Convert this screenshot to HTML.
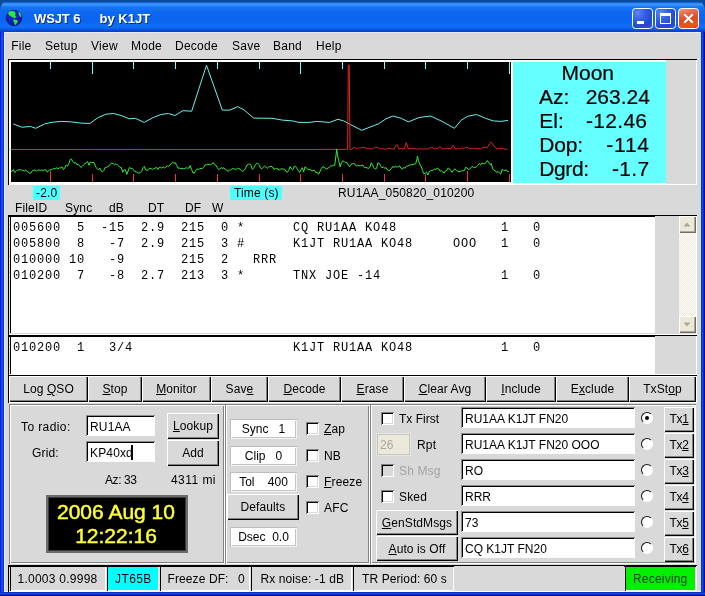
<!DOCTYPE html>
<html lang="en"><head><meta charset="utf-8"><title>WSJT 6 by K1JT</title>
<style>
html,body{margin:0;padding:0}
body{width:705px;height:596px;overflow:hidden;background:#d9d9d9;position:relative;font-family:"Liberation Sans",Arial,sans-serif;font-size:12px;color:#000}
div,svg{position:absolute;box-sizing:border-box}
#win{left:0;top:0;width:705px;height:596px;overflow:hidden;background:#d9d9d9;will-change:transform}
svg svg, div>svg{position:static}
.abs{position:absolute}
.t{white-space:nowrap;line-height:14px;font-size:12px;letter-spacing:0.15px}
.mono{white-space:nowrap;font-family:"Liberation Mono","Courier New",monospace;font-size:12px;letter-spacing:0.8px;line-height:16px}
.moon{white-space:nowrap;font-size:21px;line-height:24px;-webkit-text-stroke:0.2px #000}
.clock{white-space:nowrap;font-size:21px;line-height:24px;color:#ffff33;-webkit-text-stroke:0.45px #ffff33}
.title{white-space:nowrap;font-weight:bold;font-size:13px;line-height:16px;color:#fff;text-shadow:1px 1px 0 #0a2a8a}
.titlebar{border-radius:9px 9px 0 0/11px 11px 0 0;background:linear-gradient(to bottom,#0a4a9c 0,#0a4ca6 2px,#2a80f4 3px,#3c96ff 4.5px,#1876f6 7px,#0e68f0 12px,#0c64ee 21px,#1070f8 27px,#0a56e0 29.5px,#0a3cc4 32px)}
.bl{background:linear-gradient(to right,#001cd4 0,#001cd4 1px,#0c44f0 1px,#0c44f0 2px,#1650f2 2px,#1650f2 3px,#0a30e0 3px)}
.br{background:linear-gradient(to left,#001098 0,#001098 1px,#0a2cc4 1px,#0a2cc4 2px,#1848e0 2px,#1848e0 3px,#0a30d0 3px)}
.bb{background:linear-gradient(to top,#001098 0,#001098 1px,#0a2cc4 1px,#0a2cc4 2px,#1848e0 2px,#1848e0 3px,#0a30d0 3px)}
.sunk{box-shadow:inset 1px 1px 0 #8c8c8c, inset -1px -1px 0 #fff, inset 2px 2px 0 #000}
.rais{box-shadow:inset 1px 1px 0 #fff, inset -1px -1px 0 #000, inset 2px 2px 0 #d9d9d9, inset -2px -2px 0 #828282}
.sunk1{box-shadow:inset 1px 1px 0 #000, inset -1px -1px 0 #fff}
.txt{background:#fff;box-shadow:inset 0 1px 0 #000, inset 1px 0 0 #e4e4e4, inset 2px 0 0 #000}
.sb{background:#ece9d8;box-shadow:inset 1px 1px 0 #fff, inset -1px -1px 0 #716f64, inset -2px -2px 0 #aca899}
.groove{box-shadow:inset 1px 1px 0 #828282, inset -1px -1px 0 #fff, inset 2px 2px 0 #fff, inset -2px -2px 0 #828282}
.rais1{box-shadow:inset 1px 1px 0 #fff, inset -1px -1px 0 #828282}
.btn{box-shadow:inset 1px 1px 0 #fff, inset -1px -1px 0 #000, inset -2px -2px 0 #828282;text-align:center;font-size:12px;letter-spacing:0.1px;white-space:nowrap;background:#d9d9d9}
.wlab{background:#fff;text-align:center;white-space:nowrap;box-shadow:inset 1px 1px 0 #bdbdbd, inset -1px -1px 0 #f4f4f4, inset 2px 2px 0 #fff, inset -2px -2px 0 #c4c4c4;border:0}
.stat{text-align:center;white-space:nowrap;padding-left:2px;box-shadow:inset 0 1px 0 #000, inset 1px 0 0 #e0e0e0, inset 2px 0 0 #000, inset -1px -1px 0 #fff}
.dis{background:#ebe9dc;box-shadow:inset 0 0 0 1px #e6e6e0, inset 0 0 0 2px #c6c6ba}
.chk{box-shadow:inset 1px 1px 0 #828282, inset -1px -1px 0 #fff, inset 2px 2px 0 #000, inset -2px -2px 0 #d9d9d9}
.radio{width:12px;height:12px;border-radius:50%;background:#fff;border:1.4px solid;border-color:#111 #fff #fff #111;transform:rotate(0deg)}
.radio i{position:absolute;left:2.6px;top:2.6px;width:4px;height:4px;border-radius:50%;background:#000}
u{text-decoration:underline;text-decoration-thickness:1px;text-underline-offset:1px}
</style></head>
<body>
<div id="win">
<div class="abs" style="left:0px;top:0px;width:705px;height:32px;background:#0a4a9c"></div>
<div class="titlebar" style="left:0px;top:0px;width:705px;height:32px;"></div>
<div class="abs" style="left:4px;top:32px;width:697px;height:1px;background:#e6edf7"></div>
<div class="abs" style="left:700px;top:32px;width:1px;height:560px;background:#c4dcfc"></div>
<div class="abs" style="left:4px;top:32px;width:1px;height:560px;background:#e6ebfa"></div>
<div class="abs" style="left:4px;top:591px;width:697px;height:1px;background:#f4f4f4"></div>
<div class="bl" style="left:0px;top:32px;width:4px;height:564px;"></div>
<div class="br" style="left:701px;top:32px;width:4px;height:564px;"></div>
<div class="bb" style="left:0px;top:592px;width:705px;height:4px;"></div>
<svg class="abs" style="left:4px;top:8px" width="20" height="20" viewBox="0 0 20 20">
<defs><radialGradient id="gl" cx="40%" cy="35%" r="75%"><stop offset="0" stop-color="#1a34d8"/><stop offset="1" stop-color="#0a0a9a"/></radialGradient></defs>
<circle cx="10" cy="10" r="7.9" fill="url(#gl)" stroke="#0a1a80" stroke-width="0.6"/>
<path d="M6.6 3.1 L10.5 3.3 L11.7 5.6 L11.1 7.3 L12.3 9.0 L10.6 10.3 L8.8 9.3 L7.1 8.6 L5.4 7.3 L3.9 5.6 L4.8 3.9 Z" fill="#2ee83a"/>
<path d="M9.4 11.4 L13.0 12.0 L14.0 13.3 L12.8 15.0 L11.8 17.1 L10.5 16.3 L10.1 14.1 L9.1 12.9 Z" fill="#2ee83a"/>
<path d="M14.3 3.7 L16.0 4.8 L17.0 6.9 L17.0 9.3 L15.6 8.2 L14.7 6.0 Z" fill="#2ee83a"/>
</svg>
<div class="title" style="left:34px;top:11px;letter-spacing:-0.1px">WSJT 6</div>
<div class="title" style="left:99.5px;top:11px;letter-spacing:0">by K1JT</div>
<div class="abs" style="left:632px;top:8px;width:21px;height:21px;border-radius:3.5px;box-sizing:border-box;border:1px solid #fff;background:radial-gradient(circle at 25% 20%,#5c86f2 0%,#3560e4 35%,#2048d0 70%,#2a5ae0 100%)"><svg width="19" height="19" viewBox="1 1 19 19" style="display:block"><rect x="5" y="13" width="7" height="3" fill="#fff"/></svg></div>
<div class="abs" style="left:655px;top:8px;width:21px;height:21px;border-radius:3.5px;box-sizing:border-box;border:1px solid #fff;background:radial-gradient(circle at 25% 20%,#5c86f2 0%,#3560e4 35%,#2048d0 70%,#2a5ae0 100%)"><svg width="19" height="19" viewBox="1 1 19 19" style="display:block"><rect x="5.5" y="6.5" width="10" height="9" fill="none" stroke="#fff" stroke-width="1"/><rect x="5" y="5" width="11" height="3" fill="#fff"/></svg></div>
<div class="abs" style="left:678px;top:8px;width:21px;height:21px;border-radius:3.5px;box-sizing:border-box;border:1px solid #fff;background:linear-gradient(165deg,#eba58e 0%,#e3704e 22%,#dd4c26 52%,#ee5614 84%,#cc3c10 100%)"><svg width="19" height="19" viewBox="1 1 19 19" style="display:block"><path d="M6.2 6.2 L14.8 14.8 M14.8 6.2 L6.2 14.8" stroke="#fff" stroke-width="2" stroke-linecap="butt"/></svg></div>
<div class="t" style="left:11.2px;top:39px;letter-spacing:0.25px">File</div>
<div class="t" style="left:45px;top:39px;letter-spacing:0.25px">Setup</div>
<div class="t" style="left:91px;top:39px;letter-spacing:0.25px">View</div>
<div class="t" style="left:131px;top:39px;letter-spacing:0.25px">Mode</div>
<div class="t" style="left:175px;top:39px;letter-spacing:0.25px">Decode</div>
<div class="t" style="left:232px;top:39px;letter-spacing:0.25px">Save</div>
<div class="t" style="left:273px;top:39px;letter-spacing:0.25px">Band</div>
<div class="t" style="left:316px;top:39px;letter-spacing:0.25px">Help</div>
<div class="sunk1" style="left:8px;top:59px;width:689px;height:126px;"></div>
<div class="abs" style="left:9px;top:60px;width:504px;height:124px;background:#fff"></div>
<div class="abs" style="left:513px;top:60px;width:153px;height:124px;background:#f2fbfb"></div>
<div class="abs" style="left:11px;top:62px;width:500px;height:120px;background:#000"></div>
<div class="abs" style="left:513px;top:62px;width:153px;height:121px;background:#66ffff"></div>
<svg class="abs" style="left:11px;top:62px" width="500" height="120" viewBox="0 0 500 120"><rect x="39" y="0" width="1" height="7" fill="#7ffafa"/><rect x="39" y="109" width="1" height="11" fill="#f03040"/><rect x="81" y="0" width="1" height="12" fill="#7ffafa"/><rect x="81" y="112" width="1" height="8" fill="#f03040"/><rect x="122" y="0" width="1" height="7" fill="#7ffafa"/><rect x="122" y="112" width="1" height="8" fill="#f03040"/><rect x="164" y="0" width="1" height="7" fill="#7ffafa"/><rect x="164" y="112" width="1" height="8" fill="#f03040"/><rect x="206" y="0" width="1" height="7" fill="#7ffafa"/><rect x="206" y="112" width="1" height="8" fill="#f03040"/><rect x="248" y="0" width="1" height="7" fill="#7ffafa"/><rect x="248" y="112" width="1" height="8" fill="#f03040"/><rect x="289" y="0" width="1" height="12" fill="#7ffafa"/><rect x="289" y="112" width="1" height="8" fill="#f03040"/><rect x="331" y="0" width="1" height="7" fill="#7ffafa"/><rect x="331" y="112" width="1" height="8" fill="#f03040"/><rect x="373" y="0" width="1" height="7" fill="#7ffafa"/><rect x="373" y="112" width="1" height="8" fill="#f03040"/><rect x="414" y="0" width="1" height="7" fill="#7ffafa"/><rect x="414" y="112" width="1" height="8" fill="#f03040"/><rect x="456" y="0" width="1" height="7" fill="#7ffafa"/><rect x="456" y="109" width="1" height="11" fill="#f03040"/><rect x="498" y="0" width="1" height="12" fill="#7ffafa"/><rect x="498" y="112" width="1" height="8" fill="#f03040"/><polyline points="2.3,61.9 10.7,65.2 19.6,64.5 24.7,66.3 33.7,61.9 40.0,60.4 50.3,59.4 60.5,59.9 70.7,61.2 78.9,61.4 87.3,55.5 95.0,52.2 102.6,51.5 110.3,53.5 118.0,56.8 124.3,56.3 133.2,60.4 142.2,55.5 149.8,52.5 157.5,51.5 163.9,53.5 171.8,48.7 180.7,49.2 195.5,3.2 211.3,48.1 219.0,48.1 226.7,44.6 233.0,47.9 242.7,56.1 261.1,56.3 271.3,58.1 281.5,58.9 287.9,60.4 298.1,60.4 305.8,59.4 318.6,60.4 327.0,57.3 332.6,58.9 339.2,62.4 350.7,68.3 367.3,61.9 375.0,56.8 381.8,54.0 390.3,56.3 397.4,59.9 408.1,55.5 419.6,54.0 431.1,59.4 443.4,66.3 450.3,58.1 456.7,54.3 465.6,52.5 474.5,56.3 482.2,58.9 489.8,59.4 497.0,58.4" fill="none" stroke="#6af0f0" stroke-width="1"/><polyline points="0.0,87.5 334.3,87.4 336.6,87.4 337.3,3.0 338.2,3.0 339.0,87.4 340.7,87.4 342.0,86.3 343.4,85.3 344.8,86.1 346.1,87.1 347.6,85.8 349.2,86.0 350.7,85.6 352.0,85.4 353.4,85.3 354.8,85.8 356.1,86.7 357.5,86.2 358.9,86.9 360.2,86.8 361.6,87.1 363.1,86.0 364.6,85.2 366.1,85.3 367.5,85.8 368.8,87.1 370.2,86.4 371.6,86.7 372.9,87.0 374.3,87.4 375.0,87.4 376.4,86.5 377.7,86.4 379.1,86.4 380.5,86.9 381.8,86.9 383.2,87.1 384.5,84.2 385.9,82.5 388.1,87.1 389.8,86.2 391.5,87.0 393.2,87.1 395.3,80.7 397.5,87.1 399.0,86.3 400.4,86.5 401.9,86.6 403.3,86.3 404.8,87.0 406.2,87.0 407.7,87.1 409.0,86.5 410.3,87.1 411.6,86.8 412.9,87.1 414.2,86.8 415.5,87.0 416.8,87.1 418.6,86.0 420.4,85.6 421.8,85.5 423.1,87.1 424.8,86.0 426.4,86.7 428.6,84.9 430.0,85.4 431.3,87.1 432.7,86.7 434.0,86.8 435.4,86.6 436.8,86.7 438.1,86.3 439.5,87.1 440.9,84.8 442.2,83.4 444.4,87.1 445.8,86.9 447.3,86.3 448.8,86.7 450.2,86.0 451.7,86.1 453.1,86.7 454.5,85.1 455.8,85.3 457.1,85.7 458.5,87.1 459.9,86.4 461.2,87.0 462.6,86.2 463.9,86.9 465.3,86.3 466.7,86.9 468.0,86.6 469.4,87.1 471.2,85.9 473.0,85.6 474.4,85.2 475.8,86.2 477.3,83.9 478.8,81.4 480.3,80.2 481.6,81.8 483.0,84.4 484.4,85.1 485.8,87.1 487.2,86.7 488.5,86.5 489.9,86.4 491.2,86.7 492.6,86.7 493.9,87.2 495.2,87.3 496.6,87.4" fill="none" stroke="#e02626" stroke-width="1"/><polyline points="-0.3,110.1 1.0,108.9 2.4,107.6 3.7,110.6 5.1,109.4 6.4,108.1 7.8,108.0 9.2,107.6 10.5,108.3 11.9,108.1 13.2,109.1 14.6,107.8 15.9,109.4 17.3,109.9 18.6,111.5 20.0,110.9 21.3,108.7 22.7,108.2 24.0,108.0 25.4,109.1 26.7,108.7 28.1,107.5 29.4,109.1 30.8,107.7 32.1,108.8 33.5,107.7 34.8,107.8 36.2,110.1 37.5,109.0 38.9,107.9 40.2,107.7 41.6,107.2 42.9,106.4 44.3,107.1 45.6,105.6 47.0,106.8 48.3,105.8 49.7,105.9 51.0,104.9 52.4,107.6 53.7,106.0 55.1,103.0 56.4,104.2 57.8,101.7 59.1,97.8 59.6,97.1 60.5,97.2 61.8,99.5 63.2,101.2 64.5,100.3 65.8,102.5 67.2,102.6 68.5,103.5 69.9,105.5 71.2,104.4 72.6,102.8 73.9,101.7 75.3,100.7 76.6,99.5 78.0,103.3 79.3,99.9 80.7,100.7 82.0,100.3 83.4,101.0 84.7,105.1 86.1,106.4 87.4,107.9 88.8,106.1 90.1,108.9 91.5,109.9 92.8,108.7 94.2,105.4 95.5,105.3 96.9,104.6 98.2,103.8 99.6,101.7 100.9,101.1 102.3,101.7 103.6,102.9 105.0,101.6 106.3,103.0 107.7,104.0 109.0,105.5 110.4,105.7 111.7,110.2 113.1,107.9 114.4,107.7 115.8,112.4 117.1,109.0 118.5,105.5 119.8,106.3 121.2,106.3 122.5,107.6 123.9,109.7 125.2,109.8 126.6,110.7 127.9,111.1 129.3,110.6 130.6,109.5 132.0,105.6 133.3,104.3 134.7,108.0 136.0,108.4 137.4,107.9 138.7,106.1 140.1,106.6 141.4,107.5 142.8,106.7 144.1,106.1 145.5,105.3 146.8,107.5 148.2,105.3 149.5,105.5 150.9,106.2 152.2,105.0 153.6,106.0 154.9,105.1 156.3,103.9 157.6,104.7 159.0,102.7 160.3,101.9 161.7,100.2 163.0,101.3 164.4,100.7 165.7,103.5 167.1,106.3 168.4,106.0 169.8,106.6 171.1,106.3 172.5,106.7 173.8,106.5 175.2,105.8 176.5,106.1 177.9,106.2 179.2,103.6 180.6,107.4 181.9,110.8 183.3,111.2 184.6,108.6 186.0,107.1 187.3,107.3 188.7,106.9 190.0,106.3 191.4,106.4 192.7,105.3 194.1,102.9 195.4,102.9 196.8,102.3 198.1,102.6 199.5,102.7 200.8,102.0 202.2,100.6 203.5,102.7 204.9,103.2 206.2,105.4 207.6,107.5 208.9,106.9 210.3,105.6 211.6,106.6 213.0,105.7 214.3,107.6 215.7,107.9 217.0,109.5 218.4,108.0 219.7,108.0 221.1,106.6 222.4,106.9 223.8,107.0 225.1,107.5 226.5,106.1 227.8,106.6 229.2,107.2 230.5,108.4 231.9,109.5 233.2,108.3 234.6,106.2 235.9,103.1 237.3,102.4 238.6,101.9 240.0,103.2 241.3,107.3 242.7,105.7 244.0,103.6 245.4,101.5 246.7,101.1 248.1,102.8 249.4,106.0 250.8,106.9 252.1,105.4 253.5,104.0 254.8,104.9 256.2,106.4 257.5,105.1 258.9,104.6 260.2,104.3 261.6,105.1 262.9,107.5 264.3,106.7 265.6,106.5 267.0,107.2 268.3,108.1 269.7,106.9 271.0,107.0 272.4,107.1 273.7,107.2 275.1,109.5 276.4,110.3 277.8,108.3 279.1,104.6 280.5,106.9 281.8,107.8 283.2,104.4 284.5,104.3 285.9,106.6 287.2,108.2 288.6,110.5 289.9,107.9 291.3,105.7 292.7,109.7 294.0,104.9 295.4,106.0 296.7,107.1 298.1,107.8 299.4,107.2 300.8,109.0 302.1,108.5 303.5,108.4 304.8,110.6 306.2,110.4 307.5,112.3 308.9,109.8 310.2,106.7 311.6,104.7 312.9,105.0 314.3,106.7 315.6,107.0 317.0,106.2 318.3,105.1 319.7,103.9 321.0,104.0 322.4,103.2 323.7,103.5 325.1,92.8 325.6,87.1 326.4,92.2 327.1,96.2 327.8,98.8 329.1,104.8 330.5,100.6 331.8,98.9 333.2,99.6 334.5,100.5 335.9,100.6 337.2,102.9 338.6,104.8 339.9,102.5 341.3,101.6 342.6,101.6 344.0,102.2 345.3,104.2 346.7,103.0 348.0,103.8 349.4,103.6 350.7,103.3 352.1,103.2 353.4,105.7 354.8,105.4 356.1,105.9 357.5,106.4 358.8,105.5 360.2,100.8 361.5,102.9 362.9,105.7 364.2,107.1 365.6,106.4 366.9,100.9 368.3,101.3 369.6,103.7 371.0,105.8 372.3,105.0 373.7,106.2 375.0,105.6 376.4,108.0 377.7,108.6 379.1,108.1 380.4,106.6 381.8,104.3 383.1,105.7 384.5,104.0 385.8,105.1 387.2,104.8 388.5,103.8 389.9,106.1 391.2,107.3 392.6,105.5 393.9,106.2 395.3,104.3 396.6,104.1 398.0,103.3 399.3,102.7 400.7,102.8 402.0,102.4 403.4,102.2 404.7,101.8 406.1,96.5 406.4,94.0 407.4,98.8 408.8,102.1 410.1,104.5 411.5,108.3 412.8,111.7 414.2,111.2 415.5,110.2 416.9,113.0 418.2,109.5 419.6,108.7 420.9,108.6 422.3,107.9 423.6,107.1 425.0,107.6 426.3,106.0 427.7,106.8 429.0,109.2 430.4,108.8 431.7,109.9 433.1,111.1 434.4,109.0 435.8,108.4 437.1,106.0 438.5,106.8 439.8,108.7 441.2,110.3 442.5,108.0 443.9,106.8 445.2,108.2 446.6,109.2 447.9,109.8 449.3,109.4 450.6,108.8 452.0,108.9 453.3,108.5 454.7,105.4 456.0,105.9 457.4,107.6 458.7,106.9 460.1,105.7 461.4,104.2 462.8,105.7 464.1,105.6 465.5,104.7 466.8,103.5 468.2,101.6 469.5,102.9 470.9,101.1 472.2,101.6 473.6,101.8 474.9,100.7 476.3,98.6 477.6,100.2 479.0,102.7 480.3,101.7 481.7,106.9 483.0,108.4 484.4,108.8 485.7,110.4 487.1,109.5 488.4,111.0 489.8,112.1 491.1,107.4 492.5,108.3 493.8,108.7 495.2,107.9 496.5,109.6 497.9,109.6" fill="none" stroke="#34ee34" stroke-width="1" stroke-linejoin="round"/></svg>
<div class="moon" style="left:561.5px;top:61px;">Moon</div>
<div class="moon" style="left:539px;top:85px;">Az:</div>
<div class="moon" style="left:585.7px;top:85px;">263.24</div>
<div class="moon" style="left:539.3px;top:109px;">El:</div>
<div class="moon" style="left:586px;top:109px;letter-spacing:0.3px">-12.46</div>
<div class="moon" style="left:539.3px;top:133px;letter-spacing:-0.2px">Dop:</div>
<div class="moon" style="left:606.3px;top:133px;letter-spacing:0.75px">-114</div>
<div class="moon" style="left:539.3px;top:157px;letter-spacing:-0.4px">Dgrd:</div>
<div class="moon" style="left:612px;top:157px;letter-spacing:0.3px">-1.7</div>
<div class="abs" style="left:33px;top:186px;width:27px;height:14px;background:#4dffff"></div>
<div class="t" style="left:36px;top:186px;">-2.0</div>
<div class="abs" style="left:230px;top:186px;width:52px;height:14px;background:#4dffff"></div>
<div class="t" style="left:234px;top:186px;">Time (s)</div>
<div class="t" style="left:338px;top:186px;">RU1AA_050820_010200</div>
<div class="t" style="left:15px;top:201px;">FileID</div>
<div class="t" style="left:65px;top:201px;">Sync</div>
<div class="t" style="left:109px;top:201px;">dB</div>
<div class="t" style="left:148px;top:201px;">DT</div>
<div class="t" style="left:185px;top:201px;">DF</div>
<div class="t" style="left:212px;top:201px;">W</div>
<div class="sunk1" style="left:8px;top:215px;width:689px;height:120px;"></div>
<div class="txt" style="left:9px;top:216px;width:646px;height:117px;"></div>
<div class="mono" style="left:13px;top:220px;">005600&nbsp;&nbsp;5&nbsp;&nbsp;-15&nbsp;&nbsp;2.9&nbsp;&nbsp;215&nbsp;&nbsp;0&nbsp;*&nbsp;&nbsp;&nbsp;&nbsp;&nbsp;&nbsp;CQ&nbsp;RU1AA&nbsp;KO48&nbsp;&nbsp;&nbsp;&nbsp;&nbsp;&nbsp;&nbsp;&nbsp;&nbsp;&nbsp;&nbsp;&nbsp;&nbsp;1&nbsp;&nbsp;&nbsp;0</div>
<div class="mono" style="left:13px;top:236px;">005800&nbsp;&nbsp;8&nbsp;&nbsp;&nbsp;-7&nbsp;&nbsp;2.9&nbsp;&nbsp;215&nbsp;&nbsp;3&nbsp;#&nbsp;&nbsp;&nbsp;&nbsp;&nbsp;&nbsp;K1JT&nbsp;RU1AA&nbsp;KO48&nbsp;&nbsp;&nbsp;&nbsp;&nbsp;OOO&nbsp;&nbsp;&nbsp;1&nbsp;&nbsp;&nbsp;0</div>
<div class="mono" style="left:13px;top:252px;">010000&nbsp;10&nbsp;&nbsp;&nbsp;-9&nbsp;&nbsp;&nbsp;&nbsp;&nbsp;&nbsp;&nbsp;215&nbsp;&nbsp;2&nbsp;&nbsp;&nbsp;RRR</div>
<div class="mono" style="left:13px;top:268px;">010200&nbsp;&nbsp;7&nbsp;&nbsp;&nbsp;-8&nbsp;&nbsp;2.7&nbsp;&nbsp;213&nbsp;&nbsp;3&nbsp;*&nbsp;&nbsp;&nbsp;&nbsp;&nbsp;&nbsp;TNX&nbsp;JOE&nbsp;-14&nbsp;&nbsp;&nbsp;&nbsp;&nbsp;&nbsp;&nbsp;&nbsp;&nbsp;&nbsp;&nbsp;&nbsp;&nbsp;&nbsp;&nbsp;1&nbsp;&nbsp;&nbsp;0</div>
<div class="abs" style="left:679px;top:216px;width:17px;height:117px;background:repeating-conic-gradient(#fff 0% 25%, #ece9d8 0% 50%) 0 0/2px 2px"></div>
<div class="sb" style="left:679px;top:216px;width:17px;height:17px"><svg width="17" height="17" style="display:block"><path d="M4.5 10.5 L8 6.5 L11.5 10.5 Z" fill="#aca899"/></svg></div>
<div class="sb" style="left:679px;top:316px;width:17px;height:17px"><svg width="17" height="17" style="display:block"><path d="M4.5 6.5 L8 10.5 L11.5 6.5 Z" fill="#aca899"/></svg></div>
<div class="sunk1" style="left:8px;top:335px;width:689px;height:40px;"></div>
<div class="txt" style="left:9px;top:336px;width:646px;height:38px;"></div>
<div class="mono" style="left:13px;top:340px;">010200&nbsp;&nbsp;1&nbsp;&nbsp;&nbsp;3/4&nbsp;&nbsp;&nbsp;&nbsp;&nbsp;&nbsp;&nbsp;&nbsp;&nbsp;&nbsp;&nbsp;&nbsp;&nbsp;&nbsp;&nbsp;&nbsp;&nbsp;&nbsp;&nbsp;&nbsp;K1JT&nbsp;RU1AA&nbsp;KO48&nbsp;&nbsp;&nbsp;&nbsp;&nbsp;&nbsp;&nbsp;&nbsp;&nbsp;&nbsp;&nbsp;1&nbsp;&nbsp;&nbsp;0</div>
<div class="sunk1" style="left:8px;top:375px;width:689px;height:28px;"></div>
<div class="btn" style="left:9px;top:376px;width:79px;height:26px;line-height:27px">Log <u>Q</u>SO</div>
<div class="btn" style="left:88px;top:376px;width:54px;height:26px;line-height:27px"><u>S</u>top</div>
<div class="btn" style="left:142px;top:376px;width:69px;height:26px;line-height:27px"><u>M</u>onitor</div>
<div class="btn" style="left:211px;top:376px;width:57px;height:26px;line-height:27px">Sav<u>e</u></div>
<div class="btn" style="left:268px;top:376px;width:73px;height:26px;line-height:27px"><u>D</u>ecode</div>
<div class="btn" style="left:341px;top:376px;width:63px;height:26px;line-height:27px"><u>E</u>rase</div>
<div class="btn" style="left:404px;top:376px;width:82px;height:26px;line-height:27px"><u>C</u>lear Avg</div>
<div class="btn" style="left:486px;top:376px;width:70px;height:26px;line-height:27px"><u>I</u>nclude</div>
<div class="btn" style="left:556px;top:376px;width:73px;height:26px;line-height:27px">E<u>x</u>clude</div>
<div class="btn" style="left:629px;top:376px;width:67px;height:26px;line-height:27px">TxSt<u>o</u>p</div>
<div class="groove" style="left:9px;top:404px;width:216px;height:160px;"></div>
<div class="t" style="left:21px;top:420px;letter-spacing:0.4px">To radio:</div>
<div class="t" style="left:32px;top:446px;">Grid:</div>
<div class="sunk" style="left:86px;top:415px;width:69px;height:21px;background:#fff"></div>
<div class="t" style="left:90px;top:420px;">RU1AA</div>
<div class="sunk" style="left:86px;top:441px;width:69px;height:21px;background:#fff"></div>
<div class="t" style="left:90px;top:446px;">KP40xd</div>
<div class="abs" style="left:131px;top:445px;width:2px;height:15px;background:#000"></div>
<div class="btn" style="left:167px;top:413px;width:52px;height:26px;line-height:27px"><u>L</u>ookup</div>
<div class="btn" style="left:167px;top:440px;width:52px;height:26px;line-height:27px">Add</div>
<div class="t" style="left:105px;top:473px;letter-spacing:-0.4px">Az: 33</div>
<div class="t" style="left:171px;top:473px;letter-spacing:0.45px">4311 mi</div>
<div class="abs" style="left:46px;top:495px;width:142px;height:58px;background:#000;box-shadow:inset 0 0 0 2px #6c6c6c, inset 0 0 0 3px #3a3a3a"></div>
<div class="clock" style="left:45px;top:500px;width:142px;text-align:center">2006 Aug 10</div>
<div class="clock" style="left:45px;top:523.5px;width:142px;text-align:center">12:22:16</div>
<div class="groove" style="left:225px;top:404px;width:145px;height:160px;"></div>
<div class="wlab" style="left:230px;top:419px;width:67px;height:20px;line-height:20px">Sync&nbsp;&nbsp;&nbsp;1</div>
<div class="wlab" style="left:230px;top:446px;width:67px;height:20px;line-height:20px">Clip&nbsp;&nbsp;&nbsp;0</div>
<div class="wlab" style="left:230px;top:472px;width:67px;height:20px;line-height:20px">Tol&nbsp;&nbsp;&nbsp;&nbsp;400</div>
<div class="btn" style="left:227px;top:494px;width:72px;height:26px;line-height:27px">Defaults</div>
<div class="wlab" style="left:230px;top:527px;width:67px;height:20px;line-height:20px">Dsec&nbsp;&nbsp;0.0</div>
<div class="chk" style="left:306px;top:422px;width:13px;height:13px;background:#fff"></div>
<div class="t" style="left:324px;top:422px;"><u>Z</u>ap</div>
<div class="chk" style="left:306px;top:449px;width:13px;height:13px;background:#fff"></div>
<div class="t" style="left:324px;top:449px;">NB</div>
<div class="chk" style="left:306px;top:475px;width:13px;height:13px;background:#fff"></div>
<div class="t" style="left:324px;top:475px;"><u>F</u>reeze</div>
<div class="chk" style="left:306px;top:501px;width:13px;height:13px;background:#fff"></div>
<div class="t" style="left:324px;top:501px;">AFC</div>
<div class="groove" style="left:370px;top:404px;width:326px;height:160px;"></div>
<div class="abs" style="left:694px;top:406px;width:1px;height:156px;background:#ececec"></div>
<div class="chk" style="left:381px;top:412px;width:13px;height:13px;background:#fff"></div>
<div class="t" style="left:399px;top:412px;letter-spacing:0">Tx First</div>
<div class="dis" style="left:376px;top:433px;width:35px;height:23px;"></div>
<div class="t" style="left:380px;top:438px;color:#aaa89a">26</div>
<div class="t" style="left:417px;top:438px;">Rpt</div>
<div class="chk" style="left:381px;top:464px;width:13px;height:13px;background:#d9d9d9"></div>
<div class="t" style="left:399px;top:464px;color:#a3a3a3">Sh Msg</div>
<div class="chk" style="left:381px;top:490px;width:13px;height:13px;background:#fff"></div>
<div class="t" style="left:399px;top:490px;">Sked</div>
<div class="btn" style="left:376px;top:510px;width:82px;height:25px;line-height:26px"><u>G</u>enStdMsgs</div>
<div class="btn" style="left:376px;top:536px;width:82px;height:25px;line-height:26px"><u>A</u>uto is Off</div>
<div class="sunk" style="left:461px;top:407px;width:174px;height:21px;background:#fff"></div>
<div class="t" style="left:465px;top:412px;letter-spacing:0">RU1AA K1JT FN20</div>
<div class="radio" style="left:641px;top:412px"><i></i></div>
<div class="btn" style="left:664px;top:407px;width:30px;height:25px;line-height:25px;letter-spacing:-0.3px">Tx<u>1</u></div>
<div class="sunk" style="left:461px;top:433px;width:174px;height:21px;background:#fff"></div>
<div class="t" style="left:465px;top:438px;letter-spacing:0">RU1AA K1JT FN20 OOO</div>
<div class="radio" style="left:641px;top:438px"></div>
<div class="btn" style="left:664px;top:433px;width:30px;height:25px;line-height:25px;letter-spacing:-0.3px">Tx<u>2</u></div>
<div class="sunk" style="left:461px;top:459px;width:174px;height:21px;background:#fff"></div>
<div class="t" style="left:465px;top:464px;letter-spacing:0">RO</div>
<div class="radio" style="left:641px;top:464px"></div>
<div class="btn" style="left:664px;top:459px;width:30px;height:25px;line-height:25px;letter-spacing:-0.3px">Tx<u>3</u></div>
<div class="sunk" style="left:461px;top:485px;width:174px;height:21px;background:#fff"></div>
<div class="t" style="left:465px;top:490px;letter-spacing:0">RRR</div>
<div class="radio" style="left:641px;top:490px"></div>
<div class="btn" style="left:664px;top:485px;width:30px;height:25px;line-height:25px;letter-spacing:-0.3px">Tx<u>4</u></div>
<div class="sunk" style="left:461px;top:511px;width:174px;height:21px;background:#fff"></div>
<div class="t" style="left:465px;top:516px;letter-spacing:0">73</div>
<div class="radio" style="left:641px;top:516px"></div>
<div class="btn" style="left:664px;top:511px;width:30px;height:25px;line-height:25px;letter-spacing:-0.3px">Tx<u>5</u></div>
<div class="sunk" style="left:461px;top:537px;width:174px;height:21px;background:#fff"></div>
<div class="t" style="left:465px;top:542px;letter-spacing:0">CQ K1JT FN20</div>
<div class="radio" style="left:641px;top:542px"></div>
<div class="btn" style="left:664px;top:537px;width:30px;height:25px;line-height:25px;letter-spacing:-0.3px">Tx<u>6</u></div>
<div class="sunk1" style="left:8px;top:565px;width:689px;height:27px;"></div>
<div class="stat" style="left:9px;top:566px;width:97px;height:25px;"></div>
<div class="t" style="left:17.5px;top:572px;letter-spacing:0.25px;color:#000">1.0003 0.9998</div>
<div class="stat" style="left:106px;top:566px;width:53px;height:25px;background:#00ffff;"></div>
<div class="t" style="left:115px;top:572px;letter-spacing:0.4px;color:#000">JT65B</div>
<div class="stat" style="left:159px;top:566px;width:91px;height:25px;"></div>
<div class="t" style="left:167.5px;top:572px;letter-spacing:0.1px;color:#000">Freeze DF:</div>
<div class="t" style="left:238px;top:572px;letter-spacing:0.1px;color:#000">0</div>
<div class="stat" style="left:250px;top:566px;width:102px;height:25px;"></div>
<div class="t" style="left:260.5px;top:572px;letter-spacing:0.1px;color:#000">Rx noise: -1 dB</div>
<div class="stat" style="left:352px;top:566px;width:102px;height:25px;"></div>
<div class="t" style="left:362px;top:572px;letter-spacing:0.1px;color:#000">TR Period: 60 s</div>
<div class="stat" style="left:624px;top:566px;width:72px;height:25px;background:#00f000;"></div>
<div class="t" style="left:633px;top:572px;letter-spacing:0.2px;color:#003800">Receiving</div>
</div>
</body></html>
